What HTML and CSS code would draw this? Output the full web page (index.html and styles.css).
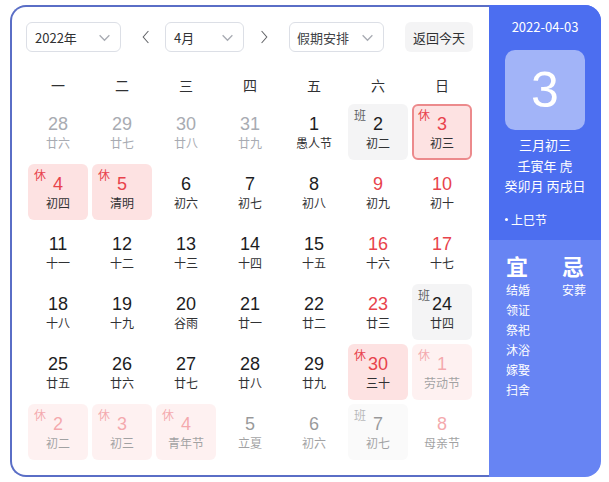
FILE: index.html
```html
<!DOCTYPE html>
<html lang="zh">
<head>
<meta charset="utf-8">
<link rel="stylesheet" href="styles.css">
</head>
<body>
<div class="calendar">
  <div class="main">
    <div class="toolbar">
      <div class="select year"><span>2022年</span><svg class="caret" viewBox="0 0 12 12"><polyline points="1.5,4 6,8.5 10.5,4"/></svg></div>
      <svg class="nav nav-prev" viewBox="0 0 10 18"><polyline points="8,1.5 1.5,9 8,16.5"/></svg>
      <div class="select month"><span>4月</span><svg class="caret" viewBox="0 0 12 12"><polyline points="1.5,4 6,8.5 10.5,4"/></svg></div>
      <svg class="nav nav-next" viewBox="0 0 10 18"><polyline points="2,1.5 8.5,9 2,16.5"/></svg>
      <div class="select holiday"><span>假期安排</span><svg class="caret" viewBox="0 0 12 12"><polyline points="1.5,4 6,8.5 10.5,4"/></svg></div>
      <button class="today-btn">返回今天</button>
    </div>
    <div class="weekdays">
      <span>一</span><span>二</span><span>三</span><span>四</span><span>五</span><span>六</span><span>日</span>
    </div>
    <div class="grid">
      <div class="cell prev"><b>28</b><i>廿六</i></div>
      <div class="cell prev"><b>29</b><i>廿七</i></div>
      <div class="cell prev"><b>30</b><i>廿八</i></div>
      <div class="cell prev"><b>31</b><i>廿九</i></div>
      <div class="cell"><b>1</b><i>愚人节</i></div>
      <div class="cell work"><em>班</em><b>2</b><i>初二</i></div>
      <div class="cell rest today"><em>休</em><b>3</b><i>初三</i></div>

      <div class="cell rest"><em>休</em><b>4</b><i>初四</i></div>
      <div class="cell rest"><em>休</em><b>5</b><i>清明</i></div>
      <div class="cell"><b>6</b><i>初六</i></div>
      <div class="cell"><b>7</b><i>初七</i></div>
      <div class="cell"><b>8</b><i>初八</i></div>
      <div class="cell weekend"><b>9</b><i>初九</i></div>
      <div class="cell weekend"><b>10</b><i>初十</i></div>

      <div class="cell"><b>11</b><i>十一</i></div>
      <div class="cell"><b>12</b><i>十二</i></div>
      <div class="cell"><b>13</b><i>十三</i></div>
      <div class="cell"><b>14</b><i>十四</i></div>
      <div class="cell"><b>15</b><i>十五</i></div>
      <div class="cell weekend"><b>16</b><i>十六</i></div>
      <div class="cell weekend"><b>17</b><i>十七</i></div>

      <div class="cell"><b>18</b><i>十八</i></div>
      <div class="cell"><b>19</b><i>十九</i></div>
      <div class="cell"><b>20</b><i>谷雨</i></div>
      <div class="cell"><b>21</b><i>廿一</i></div>
      <div class="cell"><b>22</b><i>廿二</i></div>
      <div class="cell weekend"><b>23</b><i>廿三</i></div>
      <div class="cell work"><em>班</em><b>24</b><i>廿四</i></div>

      <div class="cell"><b>25</b><i>廿五</i></div>
      <div class="cell"><b>26</b><i>廿六</i></div>
      <div class="cell"><b>27</b><i>廿七</i></div>
      <div class="cell"><b>28</b><i>廿八</i></div>
      <div class="cell"><b>29</b><i>廿九</i></div>
      <div class="cell rest"><em>休</em><b>30</b><i>三十</i></div>
      <div class="cell rest next"><em>休</em><b>1</b><i>劳动节</i></div>

      <div class="cell rest next"><em>休</em><b>2</b><i>初二</i></div>
      <div class="cell rest next"><em>休</em><b>3</b><i>初三</i></div>
      <div class="cell rest next"><em>休</em><b>4</b><i>青年节</i></div>
      <div class="cell next"><b>5</b><i>立夏</i></div>
      <div class="cell next"><b>6</b><i>初六</i></div>
      <div class="cell work next"><em>班</em><b>7</b><i>初七</i></div>
      <div class="cell weekend next"><b>8</b><i>母亲节</i></div>
    </div>
  </div>
  <aside class="side">
    <div class="side-top">
      <div class="side-date">2022-04-03</div>
      <div class="big-day">3</div>
      <div class="lunar-line">三月初三</div>
      <div class="lunar-line">壬寅年 虎</div>
      <div class="lunar-line">癸卯月 丙戌日</div>
      <div class="festival"><span class="dot"></span>上巳节</div>
    </div>
    <div class="side-bottom">
      <div class="col">
        <div class="col-title">宜</div>
        <div class="item">结婚</div>
        <div class="item">领证</div>
        <div class="item">祭祀</div>
        <div class="item">沐浴</div>
        <div class="item">嫁娶</div>
        <div class="item">扫舍</div>
      </div>
      <div class="col">
        <div class="col-title">忌</div>
        <div class="item">安葬</div>
      </div>
    </div>
  </aside>
</div>
</body>
</html>
```

FILE: styles.css
```css
* { box-sizing: border-box; }
html, body { margin: 0; padding: 0; background: #ffffff; }
body {
  font-family: "Noto Sans CJK SC", "Noto Sans", "Liberation Sans", sans-serif;
  color: #303133;
  padding: 5px 8px 5px 10px;
}
.calendar {
  display: flex;
  width: 591px;
  height: 472px;
}
.main {
  width: 479px;
  flex: none;
  border: 2px solid #5a6ec6;
  border-right: none;
  border-radius: 16px 0 0 16px;
  padding: 15px 0 0 14px;
}
.toolbar {
  display: flex;
  align-items: center;
  height: 30px;
}
.select {
  height: 30px;
  border: 1px solid #dcdfe6;
  border-radius: 6px;
  display: flex;
  align-items: center;
  justify-content: space-between;
  padding: 0 8px 0 8px;
  font-size: 13px;
  color: #303133;
  flex: none;
}
.select span { line-height: 1; }
.year { width: 95px; }
.month { width: 79px; }
.holiday { width: 95px; padding-left: 7px; color: #404246; }
.caret { width: 13px; height: 13px; fill: none; stroke: #a8abb2; stroke-width: 1.2; margin-right: 1px; }
.nav { width: 8px; height: 16px; fill: none; stroke: #606266; stroke-width: 1.3; flex: none; }
.nav-prev { margin: 0 15px 0 21px; }
.nav-next { margin: 0 21px 0 16px; }
.today-btn {
  margin-left: 21px;
  width: 68px;
  height: 30px;
  border: none;
  background: #f4f4f5;
  border-radius: 6px;
  font-family: inherit;
  font-size: 13px;
  color: #303133;
  padding: 0;
  flex: none;
}
.weekdays {
  display: grid;
  grid-template-columns: repeat(7, 60px);
  column-gap: 4px;
  margin: 18px 0 0 2px;
  height: 30px;
  align-items: center;
  text-align: center;
  font-size: 14px;
  color: #303133;
}
.grid {
  display: grid;
  grid-template-columns: repeat(7, 60px);
  grid-auto-rows: 56px;
  gap: 4px;
  margin: 4px 0 0 2px;
}
.cell {
  position: relative;
  border-radius: 6px;
  display: flex;
  flex-direction: column;
  align-items: center;
  justify-content: center;
  padding-bottom: 1px;
}
.cell b {
  font-weight: 400;
  font-family: "Liberation Sans", "Noto Sans", sans-serif;
  font-size: 18px;
  line-height: 22px;
  color: #1d1d1f;
}
.cell i {
  font-style: normal;
  font-size: 12px;
  line-height: 16px;
  color: #303133;
}
.cell em {
  position: absolute;
  left: 6px;
  top: 4px;
  font-style: normal;
  font-size: 12px;
  line-height: 14px;
}
.prev b, .prev i { color: #a8abb2; }
.weekend b { color: #e8434c; }
.rest { background: #fde2e2; }
.rest b { color: #e8434c; }
.rest em { color: #e8434c; }
.work { background: #f4f4f5; }
.work em { color: #606266; }
.today { border: 2px solid #ec8a8c; }
.today em { left: 4px; top: 2px; }
.next { opacity: 0.45; }
.side {
  width: 112px;
  flex: none;
  border-radius: 0 16px 16px 0;
  overflow: hidden;
  display: flex;
  flex-direction: column;
  background: #6784f3;
  color: #ffffff;
}
.side-top {
  background: #4c6ef0;
  height: 235px;
  flex: none;
  display: flex;
  flex-direction: column;
  align-items: center;
  padding-top: 13px;
}
.side-date { font-size: 13px; line-height: 18px; }
.big-day {
  margin-top: 14px;
  width: 80px;
  height: 80px;
  border-radius: 10px;
  background: #a2b4f8;
  display: flex;
  align-items: center;
  justify-content: center;
  font-family: "Liberation Sans", sans-serif;
  font-size: 50px;
  color: #ffffff;
}
.lunar-line { font-size: 13px; line-height: 20.5px; }
.big-day + .lunar-line { margin-top: 5px; }
.festival {
  align-self: flex-start;
  display: flex;
  align-items: center;
  margin: 15px 0 0 16px;
  font-size: 12px;
  line-height: 16px;
}
.dot {
  width: 3px;
  height: 3px;
  border-radius: 50%;
  background: #ffffff;
  margin-right: 3px;
}
.side-bottom {
  display: flex;
  padding: 11px 0 0 17px;
}
.col { width: 56px; flex: none; }
.col-title {
  font-size: 22px;
  line-height: 28px;
  font-weight: 700;
  margin-bottom: 1px;
}
.item { font-size: 12px; line-height: 20px; }
```
